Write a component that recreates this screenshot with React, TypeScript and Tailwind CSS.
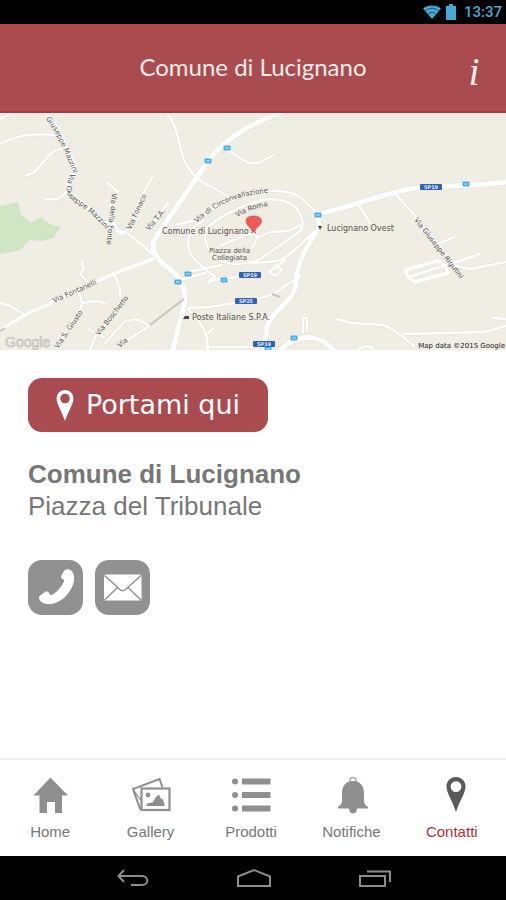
import { ReactNode, useState } from "react";

type Tab = {
  label: string;
  icon: ReactNode;
};

type Badge = {
  x: number;
  y: number;
  label?: string;
};

const minorRoads = [
  "M0 6L10 1",
  "M0 31C18 22 30 20 57 22",
  "M62 36C46 36 42 60 26 62",
  "M45 86C58 88 62 84 66 79",
  "M108 70L118 79C108 90 106 106 120 118",
  "M153 63L138 89L131 118",
  "M168 90L148 117",
  "M167 0C178 14 178 30 184 47C190 60 198 68 215 76L234 87",
  "M227 37C240 44 246 52 258 50L274 42",
  "M176 112L197 107C210 97 230 86 250 81C275 75 290 78 300 84L318 101",
  "M203 108C186 116 186 134 192 143C200 154 208 158 215 163L208 171",
  "M267 86C286 86 296 92 300 101C304 108 304 117 296 121L262 145C246 154 222 152 213 143C206 134 203 124 206 117C214 106 240 92 267 86Z",
  "M220 133C236 125 246 123 252 120L258 124L270 119L288 118L303 111",
  "M258 124L252 135",
  "M188 159L222 152",
  "M252 150L278 148C288 144 300 132 314 119",
  "M176 168L205 160",
  "M208 168L250 162",
  "M188 195L210 194C250 188 275 184 283 174L300 163",
  "M188 196C198 206 208 216 208 237",
  "M206 222L214 215",
  "M206 234L272 234",
  "M303 219L303 205L307 205L307 218",
  "M285 147L269 159L276 163L282 157L276 152",
  "M125 118L153 141",
  "M0 190C10 192 16 196 25 202",
  "M82 149L84 156L80 161L88 169",
  "M113 160C122 174 122 188 115 200L96 222L90 237",
  "M78 179C86 192 80 198 72 207L56 237",
  "M83 190C92 188 98 187 106 191",
  "M128 208C136 204 142 208 149 213L120 232",
  "M88 216L104 224M126 207L105 230",
  "M336 206L352 210L384 212C398 218 402 224 414 233",
  "M404 221L484 219L506 213",
  "M453 152L470 156L506 149",
  "M412 163L480 141",
  "M440 130L454 124",
  "M357 89L370 110",
  "M395 80L416 104L453 150",
  "M358 237C364 232 370 232 374 237",
  "M492 205L506 206",
];

const mainRoads = [
  "M285 -2C240 14 220 32 208 48L156 124C148 136 158 148 170 156C182 166 188 180 184 192L172 240",
  "M506 69C480 73 455 72 415 75C385 80 350 94 318 101L319 114C310 130 297 146 296 170C294 190 272 196 267 214L264 238",
  "M280 237C300 218 322 222 336 240",
];

const blueBadges: Badge[] = [
  { x: 227, y: 35 },
  { x: 208, y: 48 },
  { x: 318, y: 102 },
  { x: 466, y: 71 },
  { x: 188, y: 161 },
  { x: 178, y: 169 },
  { x: 224, y: 167 },
  { x: 294, y: 225 },
  { x: 268, y: 236 },
];

const roadBadges: Badge[] = [
  { x: 431, y: 74, label: "SP19" },
  { x: 250, y: 162, label: "SP19" },
  { x: 246, y: 188, label: "SP25" },
  { x: 264, y: 231, label: "SP19" },
];

const PinIcon = ({ className }: { className: string }) => (
  <svg viewBox="0 0 20 35" className={className} fill="currentColor" aria-hidden="true">
    <path
      fillRule="evenodd"
      d="M10 0C4.300 0 .5 4.300 .5 9.500C.5 16 6 23 10 35C14 23 19.500 16 19.500 9.500C19.500 4.300 15.700 0 10 0ZM10 4.200A5.400 5.400 0 1 1 10 15A5.400 5.400 0 1 1 10 4.200Z"
    />
  </svg>
);

const TownMap = () => (
  <svg
    viewBox="0 0 506 237"
    preserveAspectRatio="xMidYMid slice"
    className="block w-full h-[237px] bg-[#f0ede5]"
    role="img"
    aria-label="Mappa di Lucignano"
  >
    <path
      d="M0 93L18 89L21 102L31 110L41 104L50 111L61 114L53 125L42 128L30 127L20 137L0 141Z"
      fill="#cfe5c4"
    />
    <g fill="none" stroke="#e4e0d7" strokeLinecap="round" strokeLinejoin="round">
      {minorRoads.map((d) => (
        <path key={d} d={d} strokeWidth="3.400" />
      ))}
      {mainRoads.map((d) => (
        <path key={d} d={d} strokeWidth="6" />
      ))}
    </g>
    <g fill="none" stroke="#fff" strokeLinecap="round" strokeLinejoin="round">
      <path d="M46 -2C56 12 64 30 71 45C80 64 66 66 68 78C76 88 88 92 100 106L122 120" strokeWidth="4" />
      <path d="M0 217L25 202L113 161L153 146" strokeWidth="3" />
      <path d="M405 157L437 148Q444 148 448 160L415 169Q408 166 405 157Z" strokeWidth="3" />
      {minorRoads.map((d) => (
        <path key={d} d={d} strokeWidth="2.400" />
      ))}
      {mainRoads.map((d) => (
        <path key={d} d={d} strokeWidth="5" />
      ))}
    </g>
    <path d="M150 212L184 186M0 218L5 215M272 181L280 184" fill="none" stroke="#c9c5bb" strokeWidth="2" />

    <defs>
      <path id="mazzini-top" d="M46 6C54 16 62 30 78 72" />
      <path id="mazzini-low" d="M71 60C62 79 68 85 78 91C90 99 100 108 114 126" />
      <path id="circonvallazione" d="M197 110C216 92 240 79 286 79" />
      <path id="roma" d="M237 104C248 98 258 94 280 91" />
    </defs>
    <g fill="#55534f" fontSize="7" fontFamily="'DejaVu Sans', sans-serif">
      <text>
        <textPath href="#mazzini-top">Giuseppe Mazzini</textPath>
      </text>
      <text>
        <textPath href="#mazzini-low">Via Giuseppe Mazzini</textPath>
      </text>
      <text>
        <textPath href="#circonvallazione">Via di Circonvallazione</textPath>
      </text>
      <text>
        <textPath href="#roma">Via Roma</textPath>
      </text>
      <text transform="translate(112 80) rotate(96)">Via della Fonte</text>
      <text transform="translate(131 117) rotate(-66)">Via Fonaco</text>
      <text transform="translate(149 118) rotate(-50)">Via T.A.</text>
      <text transform="translate(54 190) rotate(-24)">Via Fontanelli</text>
      <text transform="translate(58 236) rotate(-56)">Via S. Giusto</text>
      <text transform="translate(99 223) rotate(-52)">Via Boschetto</text>
      <text transform="translate(120 235) rotate(-40)">Via</text>
      <text transform="translate(414 107) rotate(52)">Via Giuseppe Rigutini</text>
      <text x="209" y="140">Piazza della</text>
      <text x="212" y="147">Collegiata</text>
      <text x="505" y="235" textAnchor="end" fill="#222">
        Map data ©2015 Google
      </text>
    </g>
    <g fill="#55534f" fontSize="8" fontFamily="'DejaVu Sans', sans-serif">
      <text x="162" y="121">Comune di Lucignano</text>
      <text x="192" y="207">Poste Italiane S.P.A.</text>
      <text x="327" y="118">Lucignano Ovest</text>
    </g>
    <path d="M183 206h6v-3h-4zM318 113h4l-2 4z" fill="#444" />
    <text
      x="5"
      y="234"
      fontSize="14"
      fontFamily="'Liberation Sans', sans-serif"
      fill="#f6f4ef"
      stroke="#bdbab3"
      strokeWidth=".7"
    >
      Google
    </text>

    {blueBadges.map(({ x, y }) => (
      <g key={`${x}-${y}`}>
        <rect x={x - 3.5} y={y - 2.5} width="7" height="5" rx="1" fill="#45adea" />
        <path d={`M${x - 2} ${y}h4`} stroke="#c9e9fb" />
      </g>
    ))}
    {roadBadges.map(({ x, y, label }) => (
      <g key={`${x}-${y}`}>
        <rect x={x - 11} y={y - 3} width="22" height="6" rx="1" fill="#2f62b8" />
        <text
          x={x}
          y={y + 2}
          fontSize="5"
          fontWeight="bold"
          fontFamily="'DejaVu Sans', sans-serif"
          textAnchor="middle"
          fill="#e3ebf8"
        >
          {label}
        </text>
      </g>
    ))}
    <path d="M251 117l5 3M256 117l-5 3" stroke="#b5453f" />
    <path
      d="M253.500 119C252.500 116 246 112.500 246 108C246 104.500 249 103 253.500 103C258 103 261.500 104.500 261.500 108C261.500 112.500 254.500 116 253.500 119Z"
      fill="#ee5a55"
      stroke="#d14c47"
      strokeWidth=".6"
    />
  </svg>
);

const tabs: Tab[] = [
  {
    label: "Home",
    icon: (
      <svg viewBox="0 0 40 40" className="w-10 h-10" fill="#8f8f8f" aria-hidden="true">
        <path d="M20.500 1.500L38 19.500H32V37H25V26H17V37H9.500V19.500H3.500Z" />
      </svg>
    ),
  },
  {
    label: "Gallery",
    icon: (
      <svg viewBox="0 0 40 40" className="w-10 h-10" fill="none" stroke="#8f8f8f" aria-hidden="true">
        <path d="M9.500 34L2 13L28.500 3L31.500 11.500" strokeWidth="2" />
        <path d="M2 13L9.500 24" strokeWidth="1.200" />
        <rect x="10.500" y="12.500" width="28" height="21.500" strokeWidth="2.200" />
        <circle cx="17" cy="19" r="2.400" fill="#8f8f8f" stroke="none" />
        <path d="M15 30C17 25 20 28 22 26C24 22 26 19 28 19C30 21 29 23 31 23C33 24 33 28 34 30Z" fill="#8f8f8f" stroke="none" />
      </svg>
    ),
  },
  {
    label: "Prodotti",
    icon: (
      <svg viewBox="0 0 40 40" className="w-10 h-10" fill="#8f8f8f" aria-hidden="true">
        <path d="M11 2.500H39.500V8.500H11ZM11 16H39.500V22H11ZM11 29.500H39.500V35.500H11Z" />
        <circle cx="4" cy="5.500" r="3" />
        <circle cx="4" cy="19" r="3" />
        <circle cx="4" cy="32.500" r="3" />
      </svg>
    ),
  },
  {
    label: "Notifiche",
    icon: (
      <svg viewBox="0 0 40 40" className="w-10 h-10" fill="#8f8f8f" aria-hidden="true">
        <circle cx="22" cy="4.500" r="3" fill="none" stroke="#a8a8a8" strokeWidth="1.500" />
        <path d="M22 5C14 5 11 11 11 17V24C11 28 9.500 29 7 31V32.500H18C18 35.500 20 37.500 22 37.500C24 37.500 26 35.500 26 32.500H37V31C34.500 29 33 28 33 24V17C33 11 30 5 22 5Z" />
      </svg>
    ),
  },
  {
    label: "Contatti",
    icon: (
      <span className="flex w-10 h-10 pl-3.5">
        <PinIcon className="w-5 h-[35px] my-px text-[#5a5a5a]" />
      </span>
    ),
  },
];

const App = () => {
  const [active, setActive] = useState("Contatti");

  return (
    <div className="flex flex-col min-h-screen bg-white font-['Liberation_Sans',Arial,sans-serif]">
      <div className="flex items-center justify-end gap-1 h-6 px-1 bg-black text-[#45a9d4]">
        <svg viewBox="0 0 20 16" className="w-5 h-4" aria-hidden="true">
          <path d="M1 4.500C6 .4 14 .4 19 4.500L10 15Z" fill="currentColor" />
          <path d="M4 6.500C8 3.500 12 3.500 16 6.500M6.500 9.500C9 8 11 8 13.500 9.500" fill="none" stroke="#12506b" />
        </svg>
        <svg viewBox="0 0 10 16" className="w-2.5 h-4 mr-1" fill="currentColor" aria-hidden="true">
          <path d="M0 2H3V0H7V2H10V16H0Z" />
        </svg>
        <span className="font-['Roboto',sans-serif] font-medium text-[15px]">13:37</span>
      </div>

      <header className="grid grid-cols-[1fr_auto_1fr] items-center h-[89px] px-4 bg-[#aa4b50] border-b-2 border-[#a63b43] text-[#fdeeea]">
        <h1 className="col-start-2 pb-px font-['Lato',sans-serif] text-2xl">Comune di Lucignano</h1>
        <button
          type="button"
          aria-label="Informazioni"
          className="justify-self-end w-8 pt-2 cursor-pointer font-['Liberation_Serif',serif] italic font-medium text-[40px]"
        >
          i
        </button>
      </header>

      <TownMap />

      <main className="flex-1 px-7 pt-7 text-[#777]">
        <button
          type="button"
          className="flex items-center justify-center gap-3 w-60 h-[54px] rounded-[14px] bg-[#aa4b50] text-white cursor-pointer font-['DejaVu_Sans',sans-serif] text-[27px]"
        >
          <PinIcon className="w-[18px] h-[31px]" />
          Portami qui
        </button>

        <address className="mt-[26px] not-italic text-[26px] leading-8">
          <strong className="block">Comune di Lucignano</strong>
          Piazza del Tribunale
        </address>

        <div className="flex gap-3 mt-[38px]">
          <button type="button" aria-label="Chiama" className="w-[55px] h-[55px] rounded-[14px] bg-[#919191] cursor-pointer">
            <svg viewBox="0 0 55 55" className="w-full h-full" fill="#fff" aria-hidden="true">
              <path d="M38.500 9.500C41 8.500 44 10.500 45.500 14C48 22 43 31 36 38C29 44 19 46 13.500 42C11 40 10.500 37.500 11.500 36L17 32C19 31 20.500 31.500 21.500 34C22 35.500 23.500 35.500 25.500 34C30 31 34 26 36 21.500C36.500 20 36 19.500 34.500 19C33 18 33 17 33.500 15.500L36 11C36.500 10 37.500 9.700 38.500 9.500Z" />
            </svg>
          </button>
          <button type="button" aria-label="Scrivi una email" className="w-[55px] h-[55px] rounded-[14px] bg-[#919191] cursor-pointer">
            <svg viewBox="0 0 55 55" className="w-full h-full" aria-hidden="true">
              <rect x="9" y="14.500" width="37.500" height="26" rx="1.500" fill="#fff" />
              <path
                d="M9.500 15.500L25 29.500Q27.700 32 30.500 29.500L46 15.500M9.500 40L22.500 27.500M46 40L33 27.500"
                fill="none"
                stroke="#919191"
                strokeWidth="1.500"
              />
            </svg>
          </button>
        </div>
      </main>

      <nav className="grid grid-cols-5 h-[98px] pr-1 border-t-2 border-[#eee]">
        {tabs.map(({ label, icon }) => (
          <button
            key={label}
            type="button"
            onClick={() => setActive(label)}
            className={
              "flex flex-col items-center gap-1 pt-4 cursor-pointer text-[15px] leading-6 " +
              (active === label ? "text-[#b0303c]" : "text-[#777]")
            }
          >
            {icon}
            {label}
          </button>
        ))}
      </nav>

      <div className="flex items-center justify-center gap-[83px] h-11 pt-0.5 pl-0.5 bg-black text-[#8c8c8c]">
        <button type="button" aria-label="Indietro" className="cursor-pointer">
          <svg viewBox="0 0 38 22" className="w-[38px] h-[22px]" fill="none" stroke="currentColor" strokeWidth="2" aria-hidden="true">
            <path d="M10 2L4.500 8L10 14M4.500 8H28C35 8 35 17 28 17H17" />
          </svg>
        </button>
        <button type="button" aria-label="Schermata principale" className="cursor-pointer">
          <svg viewBox="0 0 38 22" className="w-[38px] h-[22px]" fill="none" stroke="currentColor" strokeWidth="2" aria-hidden="true">
            <path d="M3 8.500L19 2L35 8.500V18H3Z" />
          </svg>
        </button>
        <button type="button" aria-label="App recenti" className="cursor-pointer">
          <svg viewBox="0 0 38 22" className="w-[38px] h-[22px]" fill="none" stroke="currentColor" strokeWidth="2" aria-hidden="true">
            <path d="M4 8H29V18H4ZM11 3.500H34V14" />
          </svg>
        </button>
      </div>
    </div>
  );
};

export default App;
